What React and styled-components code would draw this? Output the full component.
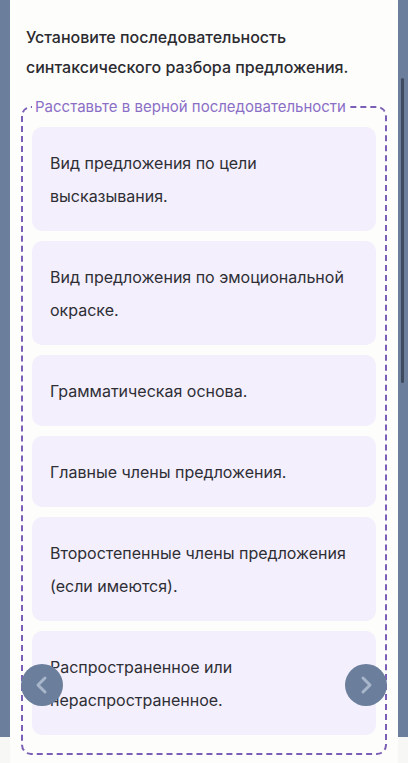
import React from "react";
import styled, { createGlobalStyle } from "styled-components";

const GlobalStyle = createGlobalStyle`
  * { box-sizing: border-box; }
  html, body {
    margin: 0;
    padding: 0;
    overflow: hidden;
  }
  body {
    font-family: Inter, "Noto Sans", sans-serif;
  }
`;

const Page = styled.div`
  position: relative;
  width: 408px;
  height: 763px;
  padding: 0 10px;
  background: linear-gradient(to bottom, #6b7e9b 737px, #f7f7f5 737px);
  overflow: hidden;
`;

const Card = styled.div`
  height: 100%;
  background: #fdfdfc;
  padding: 22px 11px 0 11px;
`;

const Title = styled.h1`
  margin: 0 0 0 5px;
  font-size: 16px;
  font-weight: 500;
  line-height: 30px;
  color: #2b2b30;
`;

const Field = styled.fieldset`
  margin: 15px 0 0 0;
  padding: 10px 9px 18px 9px;
  border: 2px dashed #7b5eb5;
  border-radius: 10px;
  display: flex;
  flex-direction: column;
  gap: 10px;
`;

const Legend = styled.legend`
  padding: 0 3px;
  font-size: 15px;
  line-height: 20px;
  color: #8b6fc6;
`;

const Item = styled.div`
  background: #f3effc;
  border-radius: 10px;
  padding: 20px 18px 18px;
  font-size: 16px;
  line-height: 33px;
  color: #2e2e35;
`;

const NavButton = styled.button`
  position: absolute;
  top: 664px;
  ${(p) => (p.$side === "left" ? "left: 21px;" : "left: 345px;")}
  width: 42px;
  height: 42px;
  border: none;
  border-radius: 50%;
  background: #6b7e9c;
  display: flex;
  align-items: center;
  justify-content: center;
  padding: 0;
`;

const ScrollThumb = styled.div`
  position: absolute;
  top: 78px;
  right: 4px;
  width: 3px;
  height: 305px;
  border-radius: 2px;
  background: #3e4a5e;
`;

const items = [
  "Вид предложения по цели высказывания.",
  "Вид предложения по эмоциональной окраске.",
  "Грамматическая основа.",
  "Главные члены предложения.",
  "Второстепенные члены предложения (если имеются).",
  "Распространенное или нераспространенное.",
];

const Chevron = ({ dir }) => (
  <svg width="16" height="20" viewBox="0 0 16 20">
    <path
      d={dir === "left" ? "M11 3 L4 10 L11 17" : "M5 3 L12 10 L5 17"}
      fill="none"
      stroke="#a7b6cb"
      strokeWidth="3"
      strokeLinecap="round"
      strokeLinejoin="round"
    />
  </svg>
);

const App = () => {
  return (
    <>
      <GlobalStyle />
      <Page>
        <Card>
          <Title>
            Установите последовательность синтаксического разбора предложения.
          </Title>
          <Field>
            <Legend>Расставьте в верной последовательности</Legend>
            {items.map((text) => (
              <Item key={text}>{text}</Item>
            ))}
          </Field>
        </Card>
        <NavButton $side="left">
          <Chevron dir="left" />
        </NavButton>
        <NavButton $side="right">
          <Chevron dir="right" />
        </NavButton>
        <ScrollThumb />
      </Page>
    </>
  );
};

export default App;
